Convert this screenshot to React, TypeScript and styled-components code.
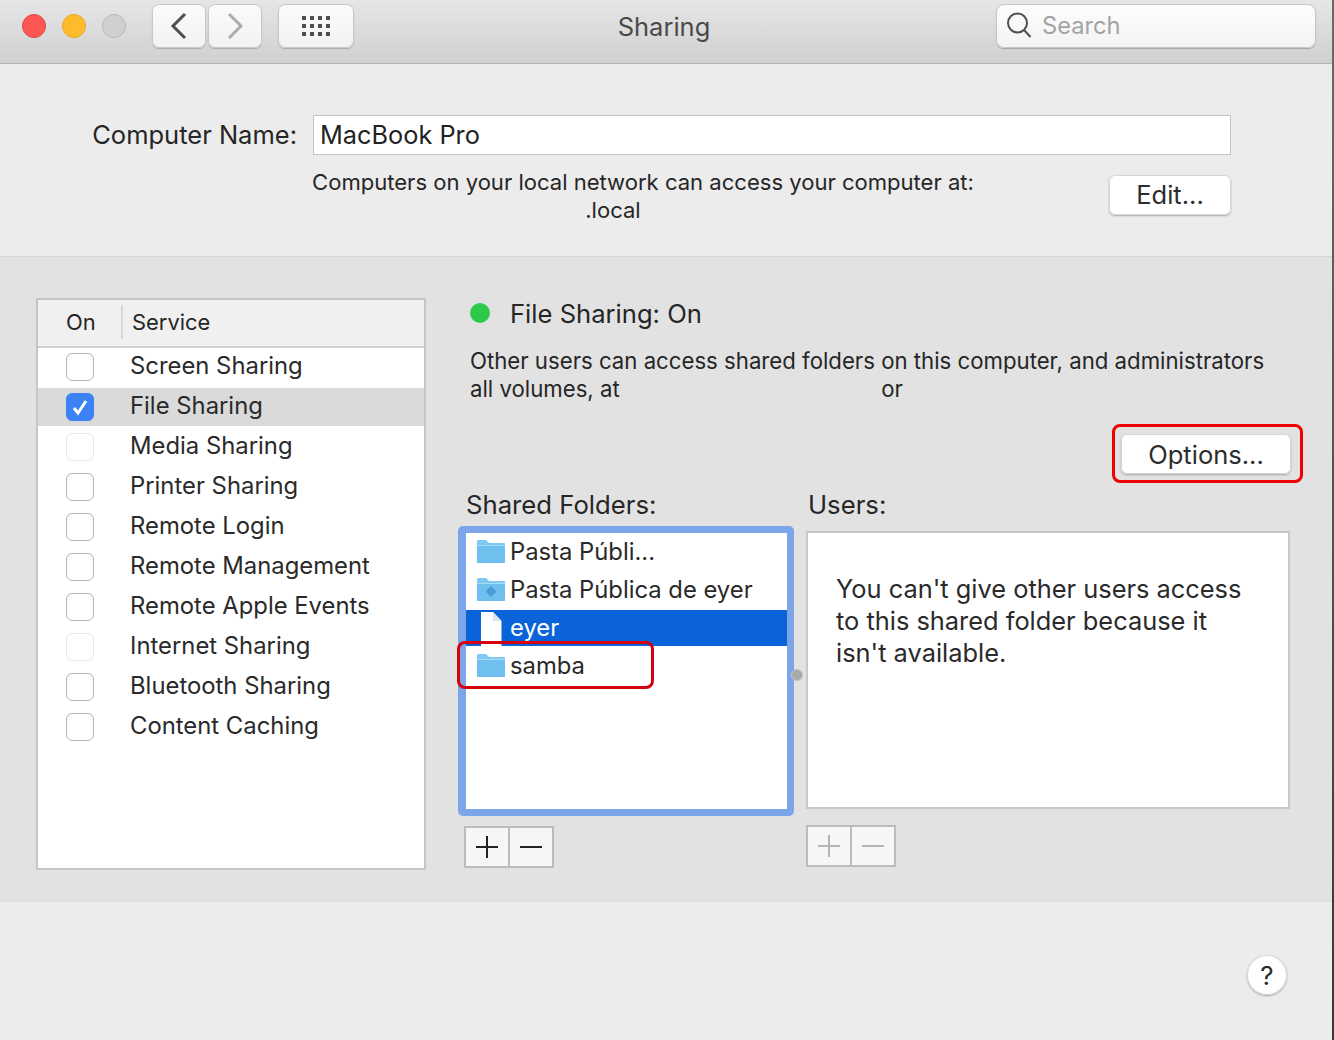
import React from "react";
import styled, { createGlobalStyle } from "styled-components";

const Global = createGlobalStyle`
  html, body { margin: 0; padding: 0; background: #3a3a36; }
  body { font-family: Inter, "Noto Sans", "Liberation Sans", sans-serif; color: #262626; }
  * { box-sizing: border-box; }
`;

const Page = styled.div`
  position: relative;
  width: 1334px;
  height: 1040px;
  overflow: hidden;
  background: linear-gradient(#6d6a5e, #3a3833);
  padding-right: 2px;
`;
const Win = styled.div`
  width: 1332px;
  height: 1040px;
  display: flex;
  flex-direction: column;
  background: #ececec;
`;
const Toolbar = styled.header`
  height: 64px;
  flex: none;
  display: flex;
  align-items: flex-start;
  padding: 4px 16px 0 22px;
  background: linear-gradient(#e6e6e6, #d0d0d0);
  border-bottom: 1px solid #b4b4b4;
`;
const Lights = styled.div`
  display: flex;
  gap: 16px;
  margin: 10px 26px 0 0;
`;
const Light = styled.span<{ $c: string; $b: string }>`
  width: 24px;
  height: 24px;
  border-radius: 50%;
  background: ${(p) => p.$c};
  border: 1px solid ${(p) => p.$b};
`;
const ToolBtn = styled.div<{ $w: number; $ml?: number }>`
  width: ${(p) => p.$w}px;
  height: 44px;
  margin-left: ${(p) => p.$ml ?? 0}px;
  display: flex;
  align-items: center;
  justify-content: center;
  background: linear-gradient(#fbfbfb, #f2f2f2);
  border-radius: 7px;
  box-shadow: inset 0 0 0 1px #c8c8c8, 0 1px 1px #aaa;
`;
const Title = styled.div`
  flex: 1;
  height: 44px;
  padding-right: 22px;
  text-align: center;
  line-height: 46px;
  font-size: 25.5px;
  color: #4a4a4a;
`;
const Search = styled.div`
  width: 320px;
  height: 44px;
  display: flex;
  align-items: center;
  gap: 10px;
  padding: 0 0 2px 10px;
  background: linear-gradient(#fdfdfd, #f3f3f3);
  border-radius: 8px;
  box-shadow: inset 0 0 0 1px #c6c6c6, 0 1px 1px #a5a5a5;
  font-size: 23.7px;
  color: #a3a3a3;
`;

const NameSection = styled.section`
  height: 192px;
  flex: none;
  display: grid;
  grid-template-columns: 297px 812px 122px;
  grid-template-rows: 40px 60px;
  row-gap: 20px;
  padding: 51px 0 0 0;
`;
const NameLabel = styled.label`
  font-size: 25.5px;
  line-height: 40px;
  text-align: right;
  white-space: nowrap;
`;
const NameInput = styled.div`
  grid-column: 2 / 4;
  margin-left: 16px;
  height: 40px;
  padding-left: 6px;
  background: #fff;
  border: 1px solid #c4c4c4;
  font-size: 25.3px;
  line-height: 37px;
  color: #222;
`;
const NameNote = styled.div`
  grid-column: 2;
  margin: -7px 0 0 15px;
  width: 662px;
  font-size: 22.05px;
  line-height: 28px;
  text-align: center;
  white-space: nowrap;
`;
const LocalName = styled.div`
  margin-right: 60px;
`;
const Btn = styled.div<{ $w: number }>`
  width: ${(p) => p.$w}px;
  height: 40px;
  display: flex;
  align-items: center;
  justify-content: center;
  background: #fff;
  border-radius: 6px;
  box-shadow: inset 0 0 0 1px #d6d6d6, 0 1px 2px #a8a8a8;
  font-size: 25.5px;
  color: #2c2c2c;
`;
const EditBtn = styled(Btn)`
  padding-bottom: 2px;
`;

const Main = styled.main`
  height: 646px;
  flex: none;
  display: flex;
  padding: 41px 0 0 36px;
  background: #e2e2e2;
  border-top: 1px solid #d6d6d6;
  border-bottom: 1px solid #dcdcdc;
`;
const ServicePanel = styled.div`
  width: 390px;
  height: 572px;
  flex: none;
  background: #fff;
  border: 2px solid #c6c6c6;
`;
const ServiceHead = styled.div`
  height: 48px;
  margin-bottom: -2px;
  display: flex;
  align-items: center;
  padding-bottom: 2px;
  background: #f0f0f0;
  border-bottom: 2px solid #cfcfcf;
  font-size: 21.9px;
`;
const OnHead = styled.div`
  width: 85px;
  height: 34px;
  padding-left: 28px;
  line-height: 34px;
  border-right: 2px solid #d9d9d9;
`;
const ServiceHeadName = styled.div`
  padding-left: 9px;
`;
const ServiceRow = styled.div<{ $sel?: boolean }>`
  height: 40px;
  display: flex;
  align-items: center;
  padding-bottom: 2px;
  font-size: 23.85px;
  color: #2a2a2a;
  background: ${(p) => (p.$sel ? "linear-gradient(transparent 2px, #dadada 2px)" : "transparent")};
`;
const Check = styled.span<{ $on?: boolean; $faint?: boolean }>`
  width: 28px;
  height: 28px;
  margin: 4px 36px 0 28px;
  flex: none;
  display: flex;
  align-items: center;
  justify-content: center;
  border-radius: 6px;
  background: ${(p) => (p.$on ? "#3a82f6" : "#fff")};
  border: 1px solid ${(p) => (p.$on ? "#3a82f6" : p.$faint ? "#e6e6e6" : "#b5b5b5")};
`;

const Detail = styled.div`
  flex: 1;
  padding-left: 38px;
  display: flex;
  flex-direction: column;
  align-items: flex-start;
`;
const Status = styled.div`
  margin: -1px 0 0 6px;
  height: 32px;
  display: flex;
  align-items: center;
  gap: 20px;
  font-size: 25.6px;
`;
const Dot = styled.span`
  width: 20px;
  height: 20px;
  border-radius: 50%;
  background: #2fc94a;
`;
const Para = styled.p`
  margin: 18px 0 0 6px;
  font-size: 22.2px;
  line-height: 28px;
  white-space: nowrap;
`;
const Gap = styled.span`
  display: inline-block;
  width: 249px;
`;
const OptionsBtn = styled(Btn)`
  align-self: flex-end;
  margin: 31px 41px 0 0;
`;
const Columns = styled.div`
  margin-top: 15px;
  display: grid;
  grid-template-columns: 342px 484px;
`;
const ColLabel = styled.div`
  font-size: 25.7px;
  line-height: 32px;
  margin: 0 0 5px 2px;
`;
const Ring = styled.div`
  position: relative;
  width: 336px;
  height: 290px;
  margin-left: -6px;
  padding: 7px 7px 7px 8px;
  border-radius: 5px;
  background: #7da5ea;
`;
const FolderList = styled.div`
  height: 276px;
  background: #fff;
`;
const FolderRow = styled.div<{ $sel?: boolean }>`
  height: 38px;
  display: flex;
  align-items: center;
  gap: 4px;
  padding-left: 10px;
  font-size: 23.8px;
  color: ${(p) => (p.$sel ? "#fff" : "#2a2a2a")};
  background: ${(p) => (p.$sel ? "linear-gradient(transparent 1px, #0a63d8 1px, #0a63d8 37px, transparent 37px)" : "transparent")};
`;
const FolderName = styled.span`
  margin-top: -2px;
`;
const Splitter = styled.span`
  position: absolute;
  left: 333px;
  top: 143px;
  width: 12px;
  height: 12px;
  border-radius: 50%;
  background: #a9a9a9;
  border: 1px solid #c4c4c4;
`;
const UsersBox = styled.div`
  width: 484px;
  height: 278px;
  margin: 10px 0 16px 0;
  padding: 40px 0 0 28px;
  background: #fff;
  border: 2px solid #c8c8c8;
  font-size: 25.4px;
  line-height: 32px;
  color: #2a2a2a;
`;
const Stepper = styled.div<{ $off?: boolean }>`
  width: 90px;
  height: 42px;
  margin-top: 10px;
  display: flex;
  background: #f6f6f6;
  border: 2px solid #bcbcbc;
  color: ${(p) => (p.$off ? "#b5b5b5" : "#222")};
`;
const StepCell = styled.div`
  flex: 1;
  display: flex;
  align-items: center;
  justify-content: center;
  & + & { border-left: 2px solid #bcbcbc; }
`;

const Footer = styled.footer`
  flex: 1;
  display: flex;
  justify-content: flex-end;
  padding: 53px 45px 0 0;
`;
const Help = styled.div`
  width: 40px;
  height: 40px;
  border-radius: 50%;
  display: flex;
  align-items: center;
  justify-content: center;
  background: #fff;
  box-shadow: inset 0 0 0 1px #d6d6d6, 0 1px 2px #a5a5a5;
  font-size: 26px;
  color: #2a2a2a;
`;
const Annot = styled.div<{ $x: number; $y: number; $w: number; $h: number; $c: string }>`
  position: absolute;
  left: ${(p) => p.$x}px;
  top: ${(p) => p.$y}px;
  width: ${(p) => p.$w}px;
  height: ${(p) => p.$h}px;
  border: 3px solid ${(p) => p.$c};
  border-radius: 8px;
  pointer-events: none;
`;

const Chev = ({ d, c }: { d: string; c: string }) => (
  <svg width="22" height="28" viewBox="0 0 22 28" fill="none" stroke={c} strokeWidth="3">
    <path d={d} />
  </svg>
);
const GridIcon = () => (
  <svg width="30" height="22" viewBox="0 0 30 22" fill="#4e4e4e">
    {[1, 9, 17].flatMap((y) =>
      [1, 9, 17, 25].map((x) => <rect key={`${x}-${y}`} x={x} y={y} width="4" height="4" />)
    )}
  </svg>
);
const Mag = () => (
  <svg width="26" height="28" viewBox="0 0 26 28" fill="none" stroke="#4f4f4f" strokeWidth="2">
    <circle cx="11.5" cy="12" r="9.5" />
    <path d="M18 19l6.5 7" />
  </svg>
);
const Tick = () => (
  <svg width="20" height="20" viewBox="0 0 20 20" fill="none" stroke="#fff" strokeWidth="3">
    <path d="M4 11l4 5 8-12" />
  </svg>
);
const Folder = ({ pub }: { pub?: boolean }) => (
  <svg width="30" height="26" viewBox="0 1 30 26">
    <path d="M1 3.500Q1 2 2.500 2H10l3 3h15.500Q29 5 29 6.500V24q0 1-1 1H2q-1 0-1-1z" fill="#7fc8f2" />
    <path d="M1 7h28v17q0 1-1 1H2q-1 0-1-1z" fill="#6fc0ef" />
    <path d="M1 7h28v1H1z" fill="#a5dcf8" />
    {pub && <path d="M15 10l5.500 5.500L15 21l-5.500-5.500z" fill="#4a9ed8" />}
  </svg>
);
const DocIcon = () => (
  <svg width="30" height="36" viewBox="0 0 30 36">
    <path d="M5 2h12l8.500 9v25H5z" fill="#fff" />
    <path d="M17 2l8.500 9H17z" fill="#dbe6f5" />
  </svg>
);
const Plus = () => (
  <svg width="24" height="24" viewBox="0 0 24 24" stroke="currentColor" strokeWidth="2">
    <path d="M1 12h22M12 1v22" />
  </svg>
);
const Minus = () => (
  <svg width="24" height="24" viewBox="0 0 24 24" stroke="currentColor" strokeWidth="2">
    <path d="M1 12h22" />
  </svg>
);

const services: { name: string; on?: boolean; faint?: boolean }[] = [
  { name: "Screen Sharing" },
  { name: "File Sharing", on: true },
  { name: "Media Sharing", faint: true },
  { name: "Printer Sharing" },
  { name: "Remote Login" },
  { name: "Remote Management" },
  { name: "Remote Apple Events" },
  { name: "Internet Sharing", faint: true },
  { name: "Bluetooth Sharing" },
  { name: "Content Caching" },
];

export default function App() {
  return (
    <Page>
      <Global />
      <Win>
        <Toolbar>
          <Lights>
            <Light $c="#fc5753" $b="#e0443e" />
            <Light $c="#fdbc2c" $b="#e8a823" />
            <Light $c="#d0d0d0" $b="#b8b8b8" />
          </Lights>
          <ToolBtn $w={54}><Chev c="#4e4e4e" d="M17 2L5 14l12 12" /></ToolBtn>
          <ToolBtn $w={54} $ml={2}><Chev c="#adadad" d="M5 2l12 12L5 26" /></ToolBtn>
          <ToolBtn $w={76} $ml={16}><GridIcon /></ToolBtn>
          <Title>Sharing</Title>
          <Search><Mag />Search</Search>
        </Toolbar>
        <NameSection>
          <NameLabel>Computer Name:</NameLabel>
          <NameInput>MacBook Pro</NameInput>
          <NameNote>
            Computers on your local network can access your computer at:
            <LocalName>.local</LocalName>
          </NameNote>
          <EditBtn $w={122}>Edit...</EditBtn>
        </NameSection>
        <Main>
          <ServicePanel>
            <ServiceHead>
              <OnHead>On</OnHead>
              <ServiceHeadName>Service</ServiceHeadName>
            </ServiceHead>
            {services.map((s) => (
              <ServiceRow key={s.name} $sel={s.on}>
                <Check $on={s.on} $faint={s.faint}>{s.on && <Tick />}</Check>
                {s.name}
              </ServiceRow>
            ))}
          </ServicePanel>
          <Detail>
            <Status><Dot />File Sharing: On</Status>
            <Para>
              Other users can access shared folders on this computer, and administrators
              <br />
              all volumes, at <Gap /> or
            </Para>
            <OptionsBtn $w={170}>Options...</OptionsBtn>
            <Columns>
              <div>
                <ColLabel>Shared Folders:</ColLabel>
                <Ring>
                  <FolderList>
                    <FolderRow><Folder /><FolderName>Pasta Públi...</FolderName></FolderRow>
                    <FolderRow><Folder pub /><FolderName>Pasta Pública de eyer</FolderName></FolderRow>
                    <FolderRow $sel><DocIcon /><FolderName>eyer</FolderName></FolderRow>
                    <FolderRow><Folder /><FolderName>samba</FolderName></FolderRow>
                  </FolderList>
                  <Splitter />
                </Ring>
                <Stepper>
                  <StepCell><Plus /></StepCell>
                  <StepCell><Minus /></StepCell>
                </Stepper>
              </div>
              <div>
                <ColLabel>Users:</ColLabel>
                <UsersBox>
                  You can't give other users access
                  <br />
                  to this shared folder because it
                  <br />
                  isn't available.
                </UsersBox>
                <Stepper $off>
                  <StepCell><Plus /></StepCell>
                  <StepCell><Minus /></StepCell>
                </Stepper>
              </div>
            </Columns>
          </Detail>
        </Main>
        <Footer>
          <Help>?</Help>
        </Footer>
      </Win>
      <Annot $x={1112} $y={424} $w={191} $h={59} $c="#f00000" />
      <Annot $x={457} $y={641} $w={197} $h={48} $c="#d4000f" />
    </Page>
  );
}
